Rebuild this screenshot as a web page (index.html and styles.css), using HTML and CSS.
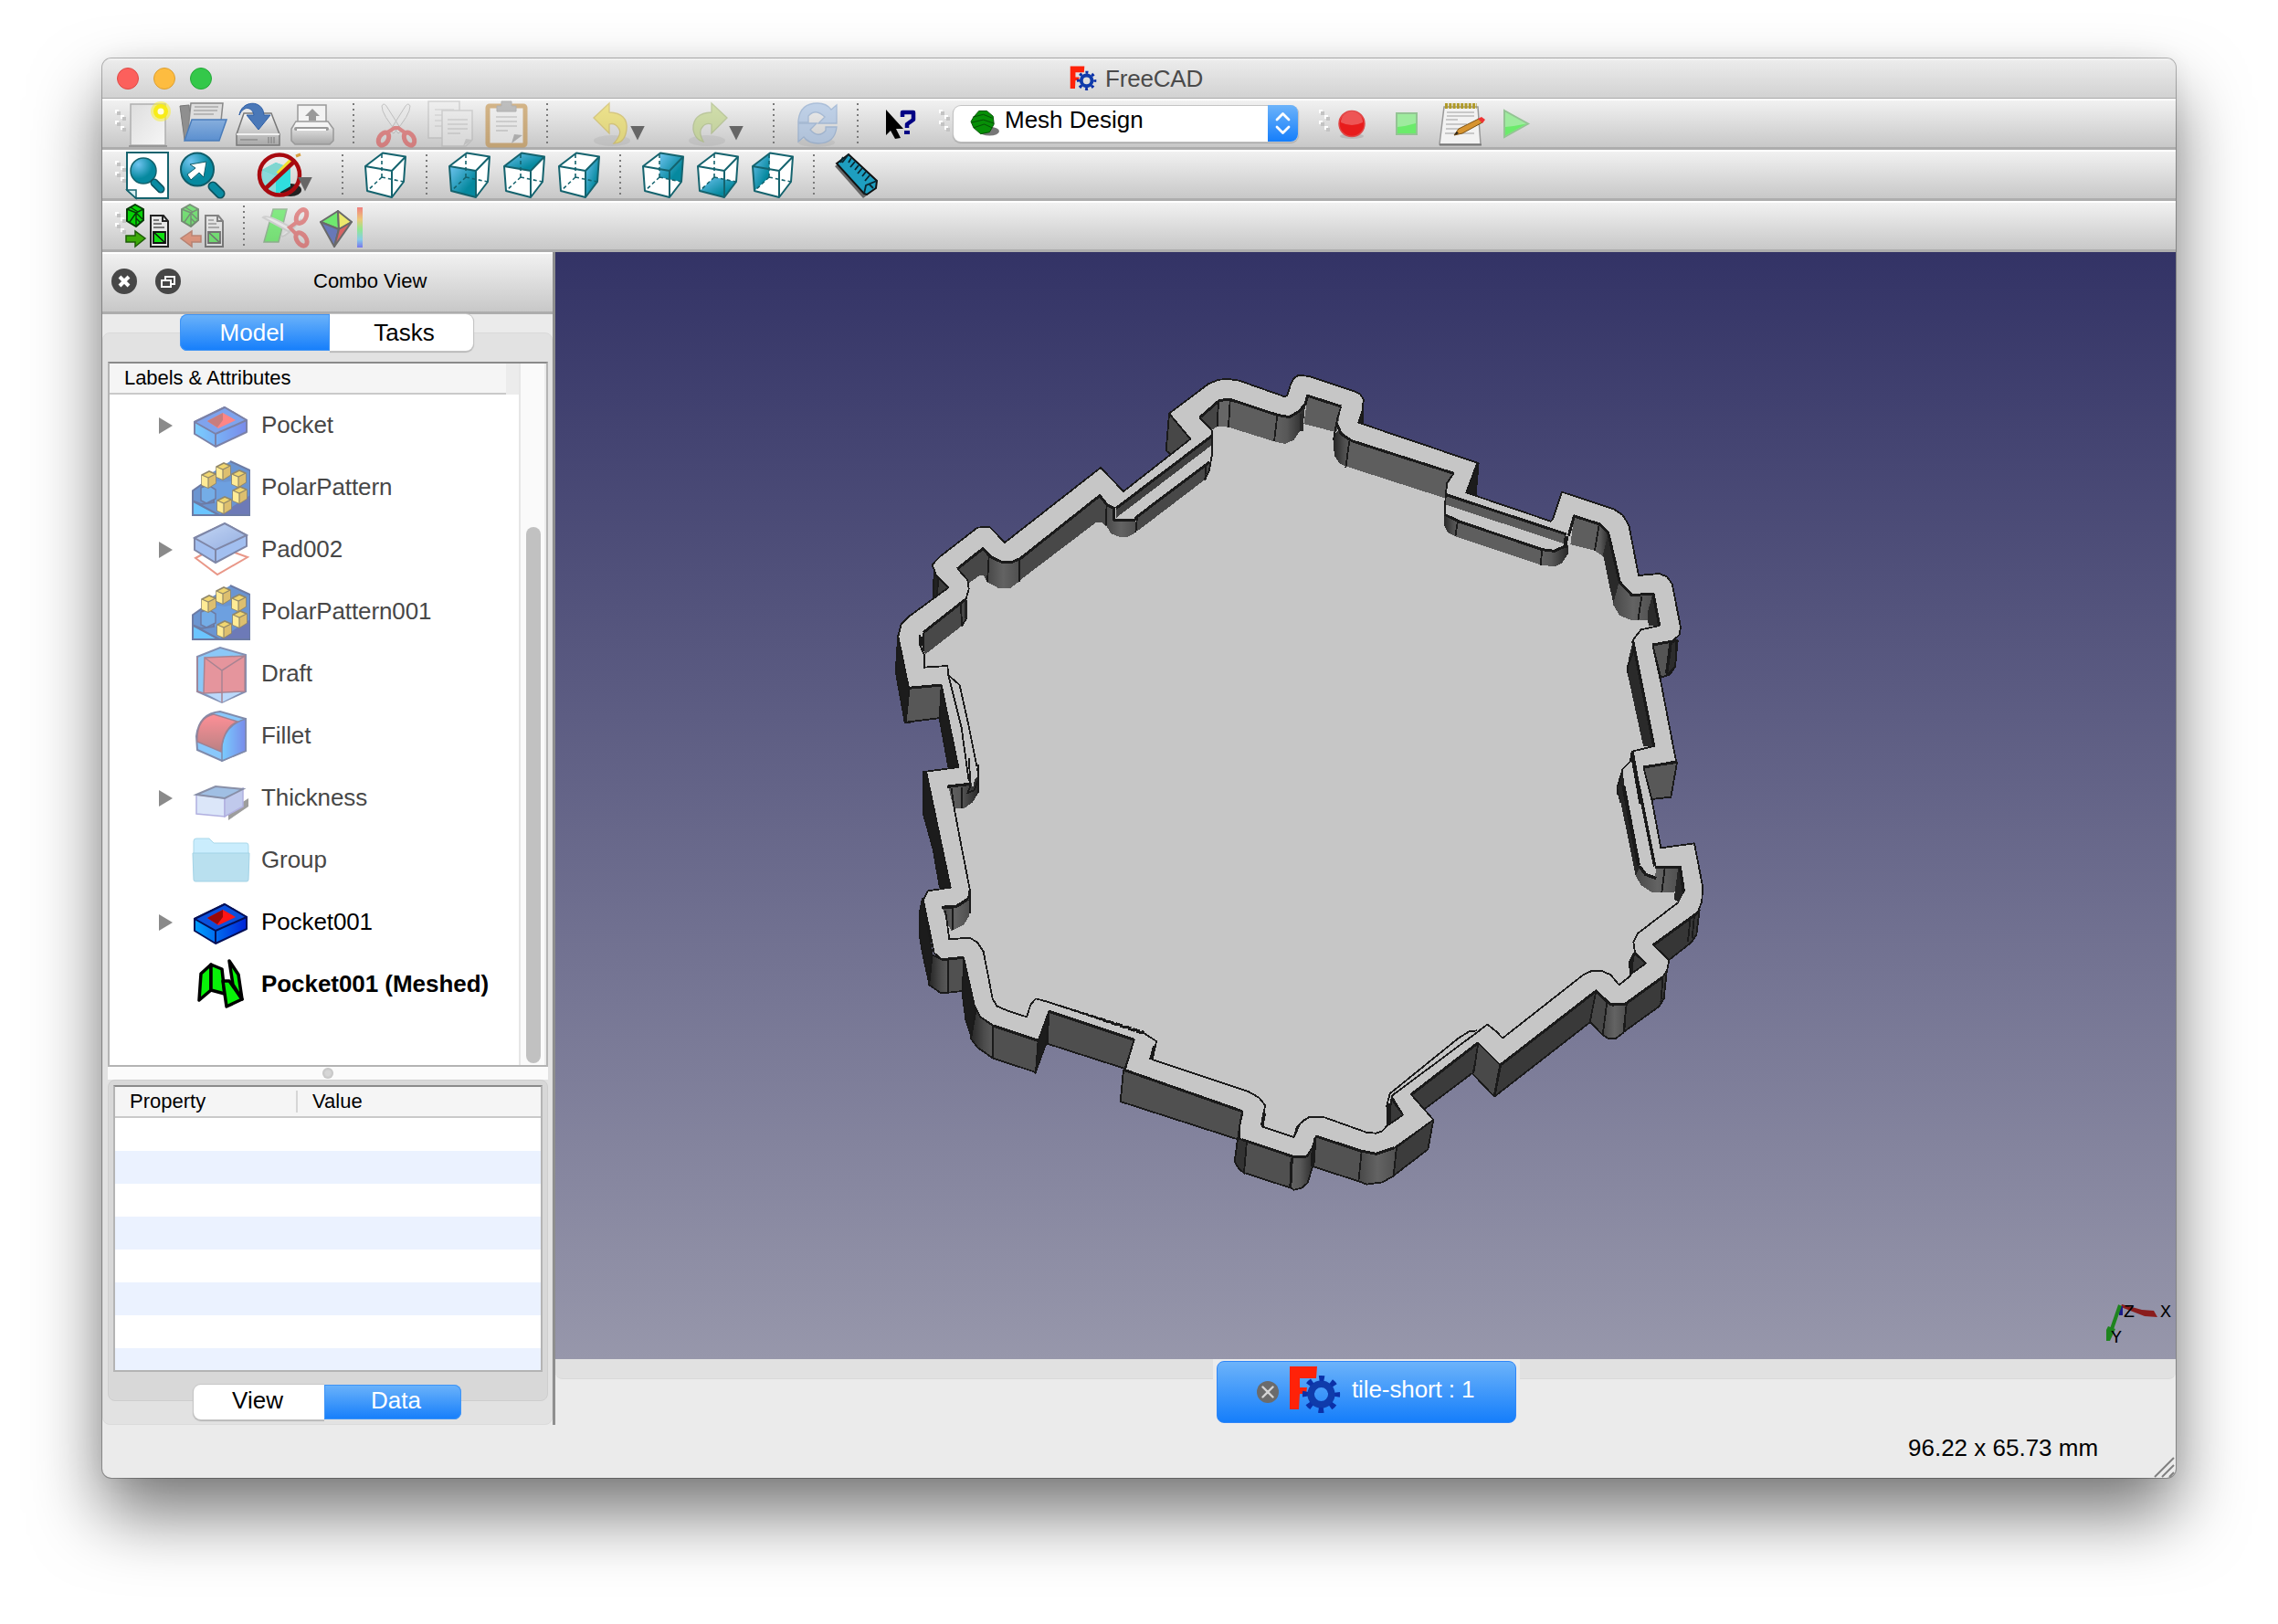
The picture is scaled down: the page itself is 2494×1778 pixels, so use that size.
FILE: index.html
```html
<!DOCTYPE html>
<html lang="en">
<head>
<meta charset="utf-8">
<title>FreeCAD</title>
<link rel="stylesheet" href="styles.css">
</head>
<body>
<svg class="defs" width="0" height="0" aria-hidden="true">
  <defs>
    <linearGradient id="teal" x1="0" y1="0" x2="1" y2="1"><stop offset="0" stop-color="#6fc4f0"/><stop offset=".7" stop-color="#06899f"/></linearGradient>
    <radialGradient id="lens" cx=".3" cy=".25" r=".8"><stop offset="0" stop-color="#6fc4f0"/><stop offset=".7" stop-color="#06899f"/></radialGradient>
    <linearGradient id="paper" x1="0" y1="0" x2="1" y2="1"><stop offset="0" stop-color="#dedede"/><stop offset="1" stop-color="#f6f6f6"/></linearGradient>
    <linearGradient id="metal" x1="0" y1="0" x2="0" y2="1"><stop offset="0" stop-color="#f6f6f6"/><stop offset="1" stop-color="#a8a8a8"/></linearGradient>
    <linearGradient id="folderBlue" x1="0" y1="0" x2="0" y2="1"><stop offset="0" stop-color="#86aedd"/><stop offset="1" stop-color="#5b8fcf"/></linearGradient>
    <linearGradient id="blueSide" x1="0" y1="0" x2="1" y2="0"><stop offset="0" stop-color="#00a0ff"/><stop offset="1" stop-color="#0022d8"/></linearGradient>
    <linearGradient id="padTop" x1="0" y1="0" x2="1" y2="1"><stop offset="0" stop-color="#8fb4ee"/><stop offset="1" stop-color="#3464c4"/></linearGradient>
    <linearGradient id="redFace" x1="0" y1="0" x2="0" y2="1"><stop offset="0" stop-color="#ff2b38"/><stop offset="1" stop-color="#7c1014"/></linearGradient>
    <linearGradient id="rainbow" x1="0" y1="0" x2="0" y2="1"><stop offset="0" stop-color="#f08080"/><stop offset=".3" stop-color="#ecc878"/><stop offset=".55" stop-color="#90e890"/><stop offset=".8" stop-color="#88cce8"/><stop offset="1" stop-color="#7878ec"/></linearGradient>
    <linearGradient id="wallGrad" x1="0" y1="0" x2="1" y2="0"><stop offset="0" stop-color="#626262"/><stop offset=".4" stop-color="#585858"/><stop offset="1" stop-color="#282828"/></linearGradient>
    <linearGradient id="wallGradRev" x1="0" y1="0" x2="1" y2="0"><stop offset="0" stop-color="#262626"/><stop offset=".6" stop-color="#4c4c4c"/><stop offset="1" stop-color="#5c5c5c"/></linearGradient>
    <linearGradient id="wallMid" x1="0" y1="0" x2="1" y2="0"><stop offset="0" stop-color="#484848"/><stop offset=".5" stop-color="#636363"/><stop offset="1" stop-color="#505050"/></linearGradient>

    <symbol id="logo" viewBox="-1 -1 57 54">
      <path d="M0 0H30L29 13H11V23H19L18 30H11L10 47H0Z" fill="#ff2208"/>
      <circle cx="34.5" cy="30.5" r="11.3" fill="none" stroke="#0f3bab" stroke-width="7.5"/>
      <circle cx="34.5" cy="30.5" r="17.6" fill="none" stroke="#0b30a8" stroke-width="6" stroke-dasharray="5.8 8.02" stroke-dashoffset="2.9"/>
    </symbol>
    <symbol id="cube-lines" viewBox="0 0 48 52">
      <path d="M20 28V2M20 28L4 43M20 28L44 33" fill="none" stroke="#14636e" stroke-width="1.6" stroke-dasharray="4 3"/>
      <path d="M2 16L31 21V50L4 43ZM2 16L21 1.5L46 5.500L31 21M46 5.500L44 33L31 50" fill="none" stroke="#14636e" stroke-width="2" stroke-linejoin="round"/>
    </symbol>
    <symbol id="cube-body" viewBox="0 0 48 52"><path d="M2 16L21 1.500L46 5.500L44 33L31 50L4 43Z" fill="#fff"/></symbol>
    <symbol id="handle" viewBox="0 0 12 24">
      <path d="M0 0h4v4H0zM6 6h4v4H6zM0 12h4v4H0zM6 18h4v4H6z" fill="#fff"/>
      <path d="M2 2h4v4H2zM8 8h4v4H8zM2 14h4v4H2zM8 20h4v4H8z" fill="#c3c3c3"/>
    </symbol>
    <symbol id="mini" viewBox="0 0 17 20">
      <path d="M1 5L9 1L16 4V14L8 19L1 16Z" fill="#e8bc10" stroke="#4a3a08" stroke-width="1.600"/>
      <path d="M1 5L8 8V19L1 16Z" fill="#ffdf50"/><path d="M8 8L16 4V14L8 19Z" fill="#c89610"/>
      <path d="M1 5L8 8L16 4M8 8V19" fill="none" stroke="#4a3a08" stroke-width="1.200"/>
    </symbol>
    <symbol id="polar" viewBox="0 0 64 64">
      <path d="M0 36L10 29L18 18L42 3L64 13V62H0Z" fill="#0a50b4"/>
      <path d="M0 46L28 62H0Z" fill="#0aa0ff"/><path d="M30 62L64 40V62Z" fill="#0d2288"/>
      <path d="M22 24L36 26L48 24V38L40 46L26 48L20 36Z" fill="#0d62cc"/>
      <path d="M0 36L10 29L24 36V48L10 50L0 46M0 46L30 62M42 3L64 13V62H1V36" fill="none" stroke="#0b2468" stroke-width="2"/>
      <path d="M10 32L18 29L26 34V44L16 49L10 46Z" fill="#1877d8" stroke="#0b2468" stroke-width="1.5"/>
      <use href="#mini" x="10" y="13" width="17" height="20"/><use href="#mini" x="26" y="4" width="17" height="20"/><use href="#mini" x="43" y="12" width="17" height="20"/><use href="#mini" x="44" y="30" width="17" height="20"/><use href="#mini" x="27" y="41" width="17" height="20"/>
    </symbol>
    <symbol id="pocket" viewBox="0 -2 64 64">
      <path d="M3 26L36 10L60 24V37L26 53L3 39Z" fill="url(#blueSide)" stroke="#041058" stroke-width="2" stroke-linejoin="round"/>
      <path d="M3 26L36 10L60 24L26 39Z" fill="#0b50dd" stroke="#041058" stroke-width="2" stroke-linejoin="round"/>
      <path d="M26 39V53" stroke="#041058" stroke-width="2"/>
      <path d="M17 25L34 16L48 24L29 33Z" fill="#ff1616"/><path d="M17 25L34 16V24L28 32Z" fill="#990808"/>
    </symbol>
    <symbol id="mesh-sheet" viewBox="0 0 30 48">
      <path d="M3 12H17L22 18V46H3Z" fill="#e6e6e6" stroke="#222" stroke-width="2"/><path d="M16 12V18H22" fill="none" stroke="#222" stroke-width="2"/>
      <path d="M6 17H12M6 21H15M6 25H18" stroke="#555" stroke-width="1.600"/>
      <path d="M6 30H19V42H6Z" fill="#10e010" stroke="#111" stroke-width="1.800"/><path d="M6 30L19 42" stroke="#111" stroke-width="1.500"/>
    </symbol>
    <symbol id="mesh-ball" viewBox="0 0 22 26">
      <path d="M11 1L20 6V18L12 25L2 19V6Z" fill="#05d305" stroke="#083a08" stroke-width="2"/>
      <path d="M2 6L12 10L20 6M12 10V25M12 10L5 20M12 10L19 17M6 4L14 9M12 16L17 21" fill="none" stroke="#083a08" stroke-width="1.400"/>
    </symbol>
  </defs>
</svg>

<main class="window">
  <header class="titlebar">
    <div class="lights"><i class="light light-close"></i><i class="light light-min"></i><i class="light light-zoom"></i></div>
    <svg class="title-logo"><use href="#logo"/></svg><span class="title">FreeCAD</span>
  </header>

  <div class="toolbar">
    <svg class="handle"><use href="#handle"/></svg>
    <svg class="tool" viewBox="0 0 48 48"><path d="M5 2H43V47H5Z" fill="url(#paper)" stroke="#b0b0b0" stroke-width="1.500"/><path d="M3 48H45" stroke="#8a8a8a" stroke-width="1.500"/><circle cx="38" cy="10" r="11" fill="#f7ee3a" opacity=".55"/><circle cx="38" cy="10" r="8" fill="#f8ec18"/><circle cx="38" cy="10" r="3.500" fill="#fffde0"/></svg>
    <svg class="tool" viewBox="0 0 48 48"><path d="M-1 4L9 3L12 41H4Z" fill="#8f8f8f" stroke="#777"/><path d="M11 1H46L43 30H8Z" fill="#dedede" stroke="#888" stroke-width="1.500"/><path d="M15 5H41M14 9H40M14 13H36" stroke="#aaa" stroke-width="1.500"/><path d="M12 19H50L42 42H4Z" fill="url(#folderBlue)" stroke="#4a7cba" stroke-width="1.500"/></svg>
    <svg class="tool" viewBox="0 0 48 48"><path d="M9 12H39L48 35V47H1V35Z" fill="url(#metal)" stroke="#777" stroke-width="1.500"/><path d="M1 35H48" stroke="#fff" stroke-width="1.500"/><path d="M5 41H24M36 38V45M39 38V45M42 38V45" stroke="#8d8d8d" stroke-width="1.500"/><path d="M4 14C6 -2 30 -4 31 14H38L25 30L12 14H20C18 4 8 4 4 14Z" fill="#4a78b8" stroke="#2d5ea6"/></svg>
    <svg class="tool" viewBox="0 0 48 48"><path d="M8 3H39V24H8Z" fill="#f3f3f3" stroke="#999" stroke-width="1.500"/><path d="M24 7L32 15H28V20H20V15H16Z" fill="#9a9a9a"/><path d="M6 21H41L47 29V42L43 46H5L1 42V29Z" fill="url(#metal)" stroke="#999" stroke-width="1.500"/><path d="M6 22H41L44 29H3Z" fill="#f5f5f5"/><path d="M6 29H40" stroke="#999" stroke-width="4" stroke-linecap="round"/><path d="M7 30H39" stroke="#fff" stroke-width="2"/></svg>
    <i class="sep"></i>
    <svg class="tool dim" viewBox="0 0 48 48"><path d="M8 4Q10 0 13 4L30 31L26 34Q8 14 8 4ZM39 4Q37 0 34 4L17 31L21 34Q39 14 39 4Z" fill="#e8e8e8" stroke="#999"/><ellipse cx="10" cy="40" rx="5" ry="7.500" transform="rotate(30 10 40)" fill="none" stroke="#d93434" stroke-width="5"/><ellipse cx="38" cy="40" rx="5" ry="7.500" transform="rotate(-30 38 40)" fill="none" stroke="#d93434" stroke-width="5"/><path d="M14 33L22 28H26L33 33" fill="none" stroke="#d93434" stroke-width="4"/></svg>
    <svg class="tool faint" viewBox="0 0 48 48"><path d="M-1 -1H33V39H-1Z" fill="#ededed" stroke="#a5a5a5" stroke-width="1.500"/><path d="M6 8H27M6 14H27M6 20H15M6 26H15" stroke="#bbb" stroke-width="1.500"/><path d="M14 9H47V41L40 48H14Z" fill="#ededed" stroke="#a5a5a5" stroke-width="1.500"/><path d="M20 19H42M20 24H42M20 29H42M20 34H34" stroke="#aaa" stroke-width="1.500"/><path d="M47 41L37 48L40 40Z" fill="#aaa"/></svg>
    <svg class="tool dim" viewBox="0 0 48 48"><rect x="4" y="4" width="41" height="43" rx="2" fill="#f0f0f0" stroke="#bb7d24" stroke-width="5"/><path d="M13 16H36M13 21H36M13 26H36M13 31H26" stroke="#aaa" stroke-width="1.500"/><path d="M42 36L30 45L33 35Z" fill="#888"/><path d="M14 10V4H19V-1H30V4H35V10Z" fill="#8f8f8f" stroke="#777"/></svg>
    <i class="sep"></i>
    <span class="menu-tool"><svg class="tool dim" viewBox="0 0 48 48"><ellipse cx="26" cy="42" rx="20" ry="6" fill="#999" opacity=".4"/><path d="M6 17L23 1V11Q44 12 42 30Q40 45 28 45Q38 34 33 28Q29 22 23 24V34Z" fill="#edd92e" stroke="#c8aa20" stroke-width="1.300"/></svg><i class="caret"></i></span>
    <span class="menu-tool menu-tool-redo"><svg class="tool dim" viewBox="0 0 48 48"><ellipse cx="24" cy="42" rx="20" ry="6" fill="#999" opacity=".4"/><path d="M46 17L29 1V11Q8 12 9 30Q11 41 20 43Q14 32 19 27Q23 22 29 24V34Z" fill="#b5d06a" stroke="#94ab58" stroke-width="1.300"/></svg><i class="caret"></i></span>
    <i class="sep"></i>
    <svg class="tool dim" viewBox="0 0 48 48"><ellipse cx="24" cy="44" rx="20" ry="5" fill="#999" opacity=".4"/><path d="M4 20Q6 1 25 1Q35 1 40 8L46 3V23H26L33 16Q23 6 15 15V22H4Z" fill="#94b7e4" stroke="#6b92c6" stroke-width="1.300"/><path d="M46 27Q44 45 26 45Q15 45 10 38L4 43V23H24L17 30Q26 40 34 31V27Z" fill="#94b7e4" stroke="#6b92c6" stroke-width="1.300"/></svg>
    <i class="sep"></i>
    <svg class="tool" viewBox="0 0 48 48"><path d="M8 8V36L13 31L18 40L24 39L19 29H27Z" fill="#000"/><path d="M26 16V11H38V19L31 24V28" fill="none" stroke="#000084" stroke-width="4.500" stroke-linejoin="round"/><path d="M28 31H34V35H28Z" fill="#000084"/></svg>
    <svg class="handle handle-gap"><use href="#handle"/></svg>
    <div class="combo"><svg class="combo-icon" viewBox="0 0 32 30"><ellipse cx="21" cy="24" rx="11" ry="5" fill="#777"/><path d="M3 8L9 1H18L25 7L26 16L21 25L11 27L3 20L0 13Z" fill="#078f07" stroke="#065206"/><path d="M2 8L14 5L24 9M1 14L14 11L26 15M3 20L15 16L24 20" fill="none" stroke="#064d06"/></svg><span>Mesh Design</span><svg class="combo-arrows" viewBox="0 0 33 40"><path d="M10 16L16.500 9.500L23 16M10 24L16.500 30.500L23 24" fill="none" stroke="#fff" stroke-width="2.800" stroke-linecap="round" stroke-linejoin="round"/></svg></div>
    <svg class="handle handle-gap-wide"><use href="#handle"/></svg>
    <svg class="tool" viewBox="0 0 48 48"><ellipse cx="24" cy="37" rx="13" ry="3" fill="#999" opacity=".4"/><circle cx="24" cy="23.500" r="14" fill="#e81c1c" stroke="#e04848" stroke-width="1.500"/><path d="M12 22A12 12 0 0 1 36 22Q24 28 12 22Z" fill="#fff" opacity=".25"/></svg>
    <svg class="tool" viewBox="0 0 48 48"><path d="M13 12H35V35H13Z" fill="#9eeb9e" stroke="#94c494" stroke-width="2"/><path d="M14 27Q24 26 34 23V34H14Z" fill="#6beb6b"/></svg>
    <svg class="tool" viewBox="0 0 48 48"><path d="M5 5H42L45 46H0Z" fill="#f2f2f2" stroke="#999" stroke-width="1.500"/><path d="M0 46.500H46" stroke="#777" stroke-width="2"/><path d="M6 4H41" stroke="#b09a28" stroke-width="6" stroke-dasharray="3 1.300"/><path d="M8 11H38M8 15H38M7 19H20M7 24H30M7 29H25M6 34H38" stroke="#bbb" stroke-width="1.500"/><path d="M16 36L21 29L43 18L47 22L25 34Z" fill="#d79430" stroke="#7b5113"/><path d="M42 18L46 16L50 19L47 23Z" fill="#e33"/><path d="M16 36L19 32L21 34Z" fill="#222"/></svg>
    <svg class="tool" viewBox="0 0 48 48"><path d="M11 9L37 23.500L11 38Z" fill="#9eeb9e" stroke="#94c494" stroke-width="2"/><path d="M12 27Q23 26 35 23.500L12 36.500Z" fill="#6beb6b"/></svg>
  </div>

  <div class="toolbar">
    <svg class="handle"><use href="#handle"/></svg>
    <svg class="tool" viewBox="0 0 48 48"><path d="M1 -1H46V49H11L1 40Z" fill="#fff" stroke="#14636e" stroke-width="2"/><path d="M1 40H11V49Z" fill="#d8eef2" stroke="#14636e" stroke-width="1.500"/><circle cx="19" cy="19" r="14" fill="url(#lens)" stroke="#14636e" stroke-width="1.500"/><path d="M31 32L38 39" stroke="#0c5360" stroke-width="9" stroke-linecap="round"/><path d="M31 32L38 39" stroke="#0a8ba2" stroke-width="6" stroke-linecap="round"/></svg>
    <svg class="tool" viewBox="0 0 48 48"><circle cx="18" cy="17.500" r="18" fill="url(#lens)" stroke="#0f5c69" stroke-width="2"/><path d="M7 23L16 16L10 12L28 9L25 26L20 21L11 29Z" fill="#fff" stroke="#0f5c69"/><path d="M35 36L43 44" stroke="#0c5360" stroke-width="11" stroke-linecap="round"/><path d="M35 36L43 44" stroke="#0a8ba2" stroke-width="7.500" stroke-linecap="round"/></svg>
    <span class="menu-tool"><svg class="tool" viewBox="0 0 48 48"><ellipse cx="38" cy="40" rx="12" ry="7" fill="#222"/><path d="M7 18L22 10L38 16V36L24 44L8 38Z" fill="#2fdede"/><path d="M7 18L22 24V43L8 38Z" fill="#8adada"/><path d="M7 18L22 10L38 16L22 24Z" fill="#7fd6d0"/><path d="M24 22L40 6" stroke="#f0e030" stroke-width="4"/><path d="M44 3L49 1" stroke="#d8a040" stroke-width="3"/><circle cx="26" cy="23.500" r="22" fill="none" stroke="#a80a10" stroke-width="4.500"/><path d="M10 39L42 9" stroke="#a80a10" stroke-width="4.500"/></svg><i class="caret"></i></span>
    <i class="sep"></i>
    <svg class="tool cube" viewBox="0 0 48 52"><use href="#cube-body"/><use href="#cube-lines"/></svg>
    <i class="sep"></i>
    <svg class="tool cube" viewBox="0 0 48 52"><use href="#cube-body"/><path d="M2 16L31 21V50L4 43Z" fill="url(#teal)"/><use href="#cube-lines"/></svg>
    <svg class="tool cube" viewBox="0 0 48 52"><use href="#cube-body"/><path d="M2 16L21 1.500L46 5.500L31 21Z" fill="url(#teal)"/><use href="#cube-lines"/></svg>
    <svg class="tool cube" viewBox="0 0 48 52"><use href="#cube-body"/><path d="M31 21L46 5.500L44 33L31 50Z" fill="url(#teal)"/><use href="#cube-lines"/></svg>
    <i class="sep"></i>
    <svg class="tool cube" viewBox="0 0 48 52"><use href="#cube-body"/><path d="M21 1.500L46 5.500L44 33L20 28Z" fill="url(#teal)"/><use href="#cube-lines"/></svg>
    <svg class="tool cube" viewBox="0 0 48 52"><use href="#cube-body"/><path d="M20 28L44 33L31 50L4 43Z" fill="url(#teal)"/><use href="#cube-lines"/></svg>
    <svg class="tool cube" viewBox="0 0 48 52"><use href="#cube-body"/><path d="M2 16L21 1.500L20 28L4 43Z" fill="url(#teal)"/><use href="#cube-lines"/></svg>
    <i class="sep"></i>
    <svg class="tool" viewBox="0 0 48 48"><path d="M0 14L6 10L40 42L31 49Z" fill="#666"/><path d="M2 11L15 1L46 30L45 38L35 45L32 44Z" fill="#1e9ec0" stroke="#111" stroke-width="2"/><path d="M32 44L34 35L46 30M15 1L8 10M18 5L15 10M22 9L17 15M26 13L22 18M30 16L25 22M34 20L30 25M38 24L33 30M9 4L6 10M38 34L42 38" fill="none" stroke="#0a2630" stroke-width="1.800"/></svg>
  </div>

  <div class="toolbar">
    <svg class="handle"><use href="#handle"/></svg>
    <svg class="tool" viewBox="0 0 48 48"><use href="#mesh-ball" x="-1" y="-1" width="22" height="26"/><path d="M0 34H10V29L21 37L10 46V41H0Z" fill="#3caa08" stroke="#1e5c08" stroke-width="1.500"/><use href="#mesh-sheet" x="24" y="0" width="30" height="48"/></svg>
    <svg class="tool dim" viewBox="0 0 48 48"><use href="#mesh-ball" x="-1" y="-1" width="22" height="26"/><path d="M22 34H12V29L0 37L12 46V41H22Z" fill="#e0582c" stroke="#a03818" stroke-width="1.500"/><use href="#mesh-sheet" x="24" y="0" width="30" height="48"/></svg>
    <i class="sep"></i>
    <svg class="tool dim" viewBox="0 0 48 48"><path d="M9 5H24L15 41H-1Z" fill="#1eea1e" stroke="#4d8a4d" stroke-width="1.500"/><path d="M-2 14Q3 10 30 26L27 30ZM18 34Q21 38 40 16" fill="#eee" stroke="#bbb" stroke-width="2"/><ellipse cx="40" cy="13" rx="5" ry="8" transform="rotate(28 40 13)" fill="none" stroke="#d93434" stroke-width="5"/><ellipse cx="40" cy="38" rx="5" ry="8" transform="rotate(-35 40 38)" fill="none" stroke="#d93434" stroke-width="5"/><path d="M34 20L27 25L34 32" fill="none" stroke="#d93434" stroke-width="4"/></svg>
    <svg class="tool" viewBox="0 0 48 48"><g stroke="#6a6a6a" stroke-width="2" stroke-linejoin="round"><path d="M1 19L20 7L21 27Z" fill="#6fe86f"/><path d="M20 7L35 19L21 27Z" fill="#ece96c"/><path d="M1 19L21 27L16 46Z" fill="#6878b8"/><path d="M35 19L16 46L21 27Z" fill="#d86464"/></g><path d="M41 3H47V47H41Z" fill="url(#rainbow)"/></svg>
  </div>

  <div class="workspace">
    <aside class="dock">
      <div class="dock-title">
        <svg class="dock-btn" viewBox="0 0 28 28"><circle cx="14" cy="14" r="14" fill="#474747"/><path d="M9 9L19 19M19 9L9 19" stroke="#fff" stroke-width="4"/></svg>
        <svg class="dock-btn" viewBox="0 0 28 28"><circle cx="14" cy="14" r="14" fill="#474747"/><path d="M11 12V9H21V17H18M7 13H17V20H7Z" fill="none" stroke="#fff" stroke-width="2"/></svg>
        <span>Combo View</span>
      </div>
      <div class="tabs tabs-top"><span class="tab tab-on tab-model">Model</span><span class="tab tab-tasks">Tasks</span></div>
      <div class="panel">
        <div class="tree">
          <div class="tree-main">
            <div class="tree-head"><span>Labels &amp; Attributes</span></div>
            <div class="row off"><i class="arrow"></i><svg><use href="#pocket"/></svg><span>Pocket</span></div>
            <div class="row off"><svg class="strong"><use href="#polar"/></svg><span>PolarPattern</span></div>
            <div class="row off"><i class="arrow"></i><svg viewBox="0 -2 64 64"><path d="M4 39L28 26L61 38L28 57Z" fill="#fff" stroke="#d63a1c" stroke-width="2"/><path d="M3 17L36 1L60 14V26L26 44L3 30Z" fill="#4f86e4" stroke="#0b1a58" stroke-width="2"/><path d="M3 17L36 1L60 14L26 30Z" fill="url(#padTop)" stroke="#0b1a58" stroke-width="2"/><path d="M26 30V44" stroke="#0b1a58" stroke-width="2"/></svg><span>Pad002</span></div>
            <div class="row off"><svg class="strong"><use href="#polar"/></svg><span>PolarPattern001</span></div>
            <div class="row off"><svg viewBox="0 -1 64 64"><path d="M6 12L31 2L59 10V50L33 62L6 50Z" fill="#2296f0" stroke="#122c70" stroke-width="2"/><path d="M12 50H56L33 62Z" fill="#80b8f8"/><path d="M14 13L58 11V50L13 52Z" fill="#cf3644" stroke="#5a1430" stroke-width="1.500"/><path d="M14 13L33 27L58 11M33 27V62M6 12V50L13 52" fill="none" stroke="#5a1430" stroke-width="1.500"/></svg><span>Draft</span></div>
            <div class="row off"><svg viewBox="0 -2 64 64"><path d="M5 30Q8 5 31 3L59 11V46L33 57L6 45Z" fill="#1f96f8" stroke="#0d2260" stroke-width="2"/><path d="M33 57V40Q36 18 59 11V46Z" fill="url(#blueSide)" stroke="#0d2260" stroke-width="1.500"/><path d="M6 36Q5 10 24 6L50 14Q34 21 32 47Z" fill="url(#redFace)" stroke="#4a1030" stroke-width="1.500"/></svg><span>Fillet</span></div>
            <div class="row off"><i class="arrow"></i><svg viewBox="0 -10 64 64"><path d="M40 36L62 22V31L40 46Z" fill="#444"/><path d="M5 18L36 22V42L5 39Z" fill="#bcd0f4" stroke="#6a68c4" stroke-width="1.500"/><path d="M36 22L56 11V31L36 42Z" fill="#8898dc" stroke="#6a68c4" stroke-width="1.500"/><path d="M5 18L26 9L56 12L36 22Z" fill="#4a86cc" stroke="#1c2a58" stroke-width="2"/></svg><span>Thickness</span></div>
            <div class="row"><svg viewBox="0 -2 64 64"><path d="M2 9Q2 6 5 6H19L24 11H60Q62 11 62 14V30H2Z" fill="#caedfd" stroke="#a9d8ea"/><path d="M1 22H63L62 51Q62 53 60 53H4Q2 53 2 51Z" fill="#b9e0ef" stroke="#a3d3e6"/></svg><span class="muted">Group</span></div>
            <div class="row"><i class="arrow"></i><svg><use href="#pocket"/></svg><span>Pocket001</span></div>
            <div class="row current"><svg viewBox="0 -4 64 64"><g fill="#08f208" stroke="#000" stroke-width="3.500" stroke-linejoin="round"><path d="M8 45L10 16L21 6V34Z"/><path d="M21 6L33 11L36 38L21 34Z"/><path d="M34 24L38 52L55 44L41 24Z"/><path d="M41 2L51 17L55 44L45 28Z"/></g></svg><span>Pocket001 (Meshed)</span></div>
          </div>
          <div class="scroll"><i class="thumb"></i></div>
        </div>
        <div class="splitter"><i></i></div>
        <div class="group">
          <div class="props">
            <div class="props-head"><span class="col-prop">Property</span><span class="col-value">Value</span></div>
            <div class="stripes"></div>
          </div>
        </div>
        <div class="tabs tabs-bottom"><span class="tab tab-view">View</span><span class="tab tab-on tab-data">Data</span></div>
      </div>
    </aside>

    <section class="mdi">
      <svg class="view3d" viewBox="608 276 1774 1212">
        <g transform="translate(970 400) scale(.333333)" stroke="#1a1a1a" stroke-width="5.500" stroke-linejoin="round" shape-rendering="crispEdges">
          <!-- outer walls, north west -->
          <path d="M930 158L1005 242L935 292L920 280Z" fill="#474747"/>
          <path d="M158 680L205 730L155 768Z" fill="#3c3c3c"/><path d="M158 685L172 700L168 755L155 765Z" fill="#222"/>
          <path d="M40 885L32 1005L62 1172H80V1060Z" fill="#1c1c1c"/>
          <path d="M77 1060L182 1048L180 1158L65 1172Z" fill="#575757"/>
          <path d="M182 1050L240 1318H205L176 1160Z" fill="#1c1c1c"/>
          <!-- outer walls, north east -->
          <g transform="translate(1290 0)">
            <path d="M278 112L276 188L260 190Z" fill="#1c1c1c"/>
            <path d="M656 322L647 425L614 418Z" fill="#1c1c1c"/>
            <path d="M1228 918L1310 905L1302 990L1285 1015L1255 1025Z" fill="#555"/>
            <path d="M1290 910L1310 905L1302 990L1275 1018Z" fill="#2c2c2c"/>
            <path d="M1198 1320L1308 1305L1288 1418L1225 1425Z" fill="#585858"/>
          </g>
          <!-- outer walls, south east -->
          <g transform="translate(1290 1380)">
            <path d="M1230 524L1382 410L1372 490L1355 515L1282 573Z" fill="#363636"/><path d="M1352 435L1344 512M1365 425L1358 500" fill="none"/>
            <path d="M1275 605L1265 700L1250 725L1135 808L1140 720Z" fill="#3a3a3a"/><path d="M1262 625L1255 712" fill="none"/>
            <path d="M1042 675L1080 715L1065 822L1022 775Z" fill="#474747" stroke="none"/>
            <path d="M1078 712L1095 722L1142 720L1132 812L1105 832H1085L1064 820Z" fill="url(#wallMid)"/><path d="M1022 775L1064 820" fill="none"/>
            <path d="M728 918L1042 675L1022 778L708 1022Z" fill="#393939"/>
            <path d="M655 845L728 918L708 1022L635 945Z" fill="#494949"/>
            <path d="M435 1015L655 845L635 945L480 1062Z" fill="#3b3b3b" stroke="none"/><path d="M635 945L480 1062" fill="none"/>
            <path d="M508 1098L490 1195L375 1283L387 1188Z" fill="#3c3c3c"/>
            <path d="M387 1188L377 1283L340 1303L290 1310L262 1300L272 1203Z" fill="url(#wallMid)"/>
            <path d="M122 1152L272 1203L262 1300L115 1252Z" fill="#525252"/>
          </g>
          <!-- outer walls, south west -->
          <g transform="translate(0 1290)">
            <path d="M1160 1215L1160 1250L1185 1260L1178 1364L1160 1350L1145 1325Z" fill="#333"/>
            <path d="M1185 1258L1335 1308L1330 1412L1176 1362Z" fill="#505050"/>
            <path d="M1335 1308L1385 1308L1408 1245L1400 1345L1385 1395L1365 1412L1340 1418L1330 1412Z" fill="url(#wallGrad)"/>
            <path d="M780 1025L1170 1160L1155 1252L770 1128Z" fill="#505050"/>
            <path d="M535 832L815 925L785 1020L530 938Z" fill="#4e4e4e"/>
            <path d="M535 832L500 928L490 1035L525 940Z" fill="#1c1c1c"/>
            <path d="M352 880L500 928L492 1032L350 985Z" fill="#505050"/>
            <path d="M285 800L310 850L352 880L350 985L300 950L278 920Z" fill="url(#wallGradRev)"/>
            <path d="M257 655L295 830L280 915L262 860L250 765Z" fill="#1c1c1c"/>
            <path d="M203 662L255 655L252 765L205 770Z" fill="#505050"/>
            <path d="M148 645L185 662H203L205 770H178L142 745Z" fill="url(#wallGradRev)"/>
            <path d="M120 460L152 645L142 740L120 640L110 580V510Z" fill="#1c1c1c"/>
            <path d="M132 44L212 425H177L155 300L122 180V44Z" fill="#1c1c1c"/>
          </g>
          <!-- top face and floor -->
          <path fill="#c6c6c6" d="M930 158L1060 60L1090 48L1120 44L1160 50L1310 103L1318 98L1328 66L1340 42L1355 32L1390 36L1540 86L1558 95L1568 112L1566 145L1552 188L1942 320L1906 418L2183 512L2190 505L2220 416L2390 472L2420 492L2440 525L2472 690L2540 684L2565 694L2582 718L2610 860L2606 885L2580 908L2518 918L2545 1040L2595 1300L2488 1320L2515 1425L2545 1585L2655 1570L2682 1710L2680 1760L2665 1800L2650 1810L2520 1904L2572 1955L2565 1988L2550 2010L2425 2100H2380L2332 2055L2018 2298L1945 2225L1725 2395L1798 2478L1670 2570L1610 2590L1560 2580L1412 2532L1400 2570L1380 2600L1340 2600L1160 2540V2505L1170 2450L785 2315L815 2215L535 2122L500 2218L355 2170L310 2140L290 2100L255 1945L185 1952L158 1930L150 1890L122 1755L138 1726L212 1715L132 1334L238 1320L182 1050L75 1060L40 890L50 850L75 825L205 730L165 690L152 655L175 630L300 533L340 530L390 582L705 336L780 414L1000 242Z"/>
          <path fill="none" stroke-width="9" d="M75 1060L182 1050M355 2170L500 2218M535 2122L815 2215M785 2315L1170 2450M1170 2543L1340 2600H1380M1412 2532L1560 2580L1610 2590L1670 2570M1725 2395L1945 2225M2018 2298L2332 2055L2380 2100H2425L2550 2010M2520 1904L2670 1795M2518 918L2600 903M2488 1320L2595 1303M185 1952L255 1945"/>
          <!-- inner walls, north west -->
          <g stroke="none">
            <path d="M1030 172L1095 115L1090 200L1070 212Z" fill="#454545"/><path d="M1095 115H1130L1125 203L1088 200Z" fill="#666"/><path d="M1130 112L1285 165L1275 250L1125 203Z" fill="#5e5e5e"/>
            <path d="M1285 165L1325 170L1360 145L1378 120L1370 200L1340 245L1310 258L1275 250Z" fill="url(#wallGrad)"/>
            <path d="M1385 100L1495 135L1480 220L1372 192Z" fill="#5e5e5e"/>
            <path d="M755 470L1070 232V262L757 500Z" fill="#404040"/><path d="M820 505L1064 322L1062 345L1048 375L825 545Z" fill="#484848"/>
            <path d="M725 455L750 480V512H822V548L795 563H765L740 553L722 525Z" fill="url(#wallMid)"/>
            <path d="M437 635L702 428L725 465L722 530L710 516H690L437 708Z" fill="#484848"/>
            <path d="M338 628L390 650L437 635V710L410 731H368L333 712Z" fill="url(#wallMid)"/>
            <path d="M235 668L318 602L340 628L333 712L320 690H308L272 715Z" fill="#474747"/>
            <path d="M122 875L265 765V830L250 855L128 950Z" fill="#484848"/>
          </g>
          <g fill="none">
            <path d="M1030 172L1095 115L1130 112L1285 163L1325 170L1358 150L1378 125L1385 100L1495 135M755 470L1070 232M818 502L1062 318M750 470V510H815L825 495M437 638L702 428L728 460L752 470M235 668L318 602L345 630L385 648H410L437 636M122 878L262 768" stroke-width="9"/>
            <path d="M1030 172L1072 215V285L1062 345L1048 375L1050 330M1092 118L1088 200M1130 115L1125 203M1285 165L1275 250M725 455L722 525M825 498L820 550M437 636V712M338 628L333 712M235 668L268 705L272 735L262 770L265 830L250 855L245 785M112 885V920L125 950V992L202 987L205 1018L242 1050L275 1200L303 1340M205 1018L248 1190L272 1365M122 878V940"/>
            <path d="M1365 160V215" stroke="#2a2a2a" stroke-width="12"/><path d="M262 770V830" stroke="#222" stroke-width="9"/><path d="M115 890V920" stroke-width="10"/>
          </g>
          <!-- inner walls, north east -->
          <g transform="translate(1290 0)">
            <g stroke="none">
              <path d="M200 210L235 245L222 332L200 322L182 295L180 230Z" fill="url(#wallGradRev)"/><path d="M232 245L575 355L550 400L548 437L222 332Z" fill="#5e5e5e"/>
              <path d="M550 430L945 555L935 585L550 458Z" fill="#5a5a5a"/><path d="M542 485L588 510L580 562L555 548L542 525Z" fill="url(#wallGradRev)"/>
              <path d="M588 510L865 605L860 655L580 562Z" fill="#5e5e5e"/><path d="M865 605L905 612L950 590V620L930 650L910 660L860 657Z" fill="url(#wallGrad)"/>
              <path d="M970 495L1055 525L1038 608L958 588Z" fill="#5e5e5e"/><path d="M1055 525L1085 548L1068 630L1038 608Z" fill="url(#wallGrad)"/>
              <path d="M1085 545L1120 712L1100 785L1085 720L1065 620Z" fill="#2a2a2a"/><path d="M1118 712L1160 755L1230 750L1215 838H1160L1120 822L1098 785Z" fill="url(#wallMid)"/>
              <path d="M1228 750L1250 855H1214L1212 810Z" fill="#2a2a2a"/><path d="M1163 905L1232 1250H1197L1145 1010L1150 960Z" fill="#2a2a2a"/>
              <path d="M1130 1335L1142 1440L1120 1438L1112 1400V1380Z" fill="#222"/>
            </g>
            <g fill="none">
              <path d="M95 100L205 135M190 190L205 225L240 248L575 355M550 425L945 555M545 490L590 512L865 605L905 610L945 592M952 560L970 495L1055 522L1082 550L1120 712L1160 755L1230 750L1250 855M1163 905L1232 1250" stroke-width="9"/>
              <path d="M205 135L192 175L180 245M232 248L220 335M575 355L553 385L548 430L545 490M588 512L580 562M865 605L860 658M1052 525L1038 608M1192 758L1180 838M1250 855L1190 868L1165 900V940L1145 990V1010M1236 1250L1160 1268L1155 1300L1130 1325L1112 1385V1410M1285 910L1272 1010M1305 905V945"/>
              <path d="M945 560L940 600M1160 1270L1190 1440" stroke-width="13"/>
            </g>
          </g>
          <!-- inner walls, south east -->
          <g transform="translate(1290 1380)">
            <g stroke="none"><path d="M1180 260L1235 305L1240 270L1315 265L1300 350H1225L1190 328L1172 295Z" fill="url(#wallMid)"/><path d="M1312 265L1332 350L1315 382L1298 375Z" fill="#262626"/><path d="M1182 265L1235 300V265L1228 300L1205 290Z" fill="#c6c6c6"/></g>
            <path d="M1112 0H1138L1185 270L1172 295Z" fill="#262626" stroke="none"/><path d="M1132 0L1182 262" fill="none" stroke-width="12"/>
            <g fill="none"><path d="M1182 0L1235 265M1185 265L1205 292L1240 305M1235 268H1318L1330 350" stroke-width="10"/>
            <path d="M1268 272L1258 350M1315 382L1180 485L1165 515L1170 550L1208 585M1170 545L1152 580L1155 625L1118 655L1090 622L1060 608H1030L1000 622L735 830L715 808L685 785L655 808L370 1020L408 1082M650 805L625 808L590 830L365 1012L355 1050L358 1115L408 1082M358 1115L340 1135L320 1142L290 1140L150 1090L100 1088L70 1110L50 1155L0 1138M655 845L640 945"/></g>
            <path d="M1168 550L1205 585L1155 620Z" fill="#3a3a3a"/><path d="M1158 570V615" stroke-width="10"/><path d="M370 1030L408 1082L360 1115Z" fill="#3a3a3a"/><path d="M362 1045V1112" stroke-width="14"/><path d="M728 918L708 1022M120 1155L108 1220V1250M42 1225L38 1320" fill="none" stroke-width="8"/>
          </g>
          <!-- inner walls, south west -->
          <g transform="translate(0 1290)">
            <path d="M205 95L275 85L303 60V115L285 145L255 166L222 165Z" fill="url(#wallGrad)" stroke="none"/><path d="M275 60L300 25L285 100Z" fill="#c6c6c6" stroke="none"/>
            <path d="M185 492L225 490L272 460V520L255 548L215 568L205 550Z" fill="url(#wallMid)" stroke="none"/>
            <g fill="none"><path d="M200 94L275 85M182 490L230 488L270 462" stroke-width="10"/><path d="M303 60V115M275 430V510M250 95V165M220 492V565M215 100L225 170L240 250L275 430L270 462M272 0L278 90L268 115L290 105L303 70V20M195 500L208 595L275 590L300 605L320 635L350 790L365 815L400 830L462 850L475 810L492 790L530 800L850 905L888 930L875 990L1190 1095L1225 1115L1245 1140L1235 1210L1340 1245L1350 1210L1370 1190L1390 1180H1440"/>
            <path d="M535 802L850 900M575 815L840 905" stroke-dasharray="22 7"/><path d="M882 945L870 990M1243 1165L1235 1208" stroke-width="11"/><path d="M815 925L785 1020M1172 1160L1160 1215V1245"/></g>
          </g>
        </g>
        <!-- axis cross -->
        <g class="axes"><path d="M2323 1428L2345 1434L2358 1435L2362 1442L2348 1441L2322 1431Z" fill="#8a1c1c"/><path d="M2322 1430V1440" stroke="#1a1a8c" stroke-width="4"/><path d="M2321 1429L2312 1455" stroke="#1e841e" stroke-width="4"/><path d="M2308 1452L2316 1455L2310 1468H2306V1456Z" fill="#1e841e"/>
        <text x="2325" y="1442">Z</text><text x="2365" y="1442">X</text><text x="2311" y="1470">Y</text></g>
      </svg>
      <div class="mdi-tabs">
        <div class="mdi-edge"></div>
        <div class="mdi-slot"><div class="mdi-tab"><svg class="mdi-close" viewBox="0 0 24 24"><circle cx="12" cy="12" r="12" fill="#6b6b6b"/><path d="M6.500 6.500L17.500 17.500M17.500 6.500L6.500 17.500" stroke="#d4d4d4" stroke-width="2.400" stroke-linecap="round"/></svg><svg class="mdi-logo"><use href="#logo"/></svg><span>tile-short : 1</span></div></div>
        <div class="mdi-edge"></div>
      </div>
    </section>
  </div>

  <footer class="status"><span>96.22 x 65.73 mm</span><svg class="grip" viewBox="0 0 24 24"><path d="M1 23L22 2M9 23L22 10M17 23L22 18" stroke="#808080" stroke-width="2"/></svg></footer>
</main>
</body>
</html>
```
FILE: styles.css
```css
* { box-sizing: border-box; }
body {
  margin: 0;
  padding: 64px 112px 0;
  height: 1778px;
  overflow: hidden;
  background: #fff;
  font-family: "Liberation Sans", Arial, sans-serif;
  font-size: 26px;
  color: #000;
}
i { font-style: normal; }
svg { display: block; flex: none; overflow: visible; }
.defs { position: absolute; }

.window {
  width: 2270px;
  height: 1554px;
  display: flex;
  flex-direction: column;
  background: #ebebeb;
  border-radius: 10px;
  box-shadow: 0 0 0 1px rgba(0,0,0,.28), 0 40px 76px rgba(0,0,0,.53), 0 0 24px rgba(0,0,0,.06);
}

.titlebar {
  height: 44px;
  display: flex;
  align-items: center;
  background: linear-gradient(#f6f6f6 0, #ebebeb 3px, #d2d2d2 100%);
  border-bottom: 1px solid #a9a9a9;
  border-radius: 10px 10px 0 0;
}
.lights { display: flex; gap: 16px; padding-left: 16px; width: 1059px; }
.light { width: 24px; height: 24px; border-radius: 50%; border: 1px solid; }
.light-close { background: #fc605c; border-color: #de4a46; }
.light-min { background: #fdbc40; border-color: #dc9e30; }
.light-zoom { background: #34c84a; border-color: #24a838; }
.title-logo { width: 30px; height: 28px; }
.title { margin-left: 9px; padding-top: 2px; color: #4a4a4a; letter-spacing: -.2px; }

.toolbar {
  height: 56px;
  display: flex;
  align-items: center;
  padding: 0 0 0 14px;
  border-top: 2px solid #fff;
  border-bottom: 3px solid #adadad;
  background: linear-gradient(#f1f1f1, #c8c8c8);
}
.toolbar > * { flex: none; }
.handle { width: 12px; height: 24px; margin-top: -7px; }
.tool { width: 48px; height: 48px; margin-right: 12px; }
.cube { height: 52px; }
.dim { opacity: .5; }
.faint { opacity: .38; }
.sep {
  width: 32px;
  height: 46px;
  background: repeating-linear-gradient(#7a7a7a 0 2px, transparent 2px 6px) 8px 0 / 2px 100% no-repeat;
}
.menu-tool { width: 108px; height: 48px; display: flex; padding-left: 22px; }
.menu-tool .tool { margin-right: 0; }
.menu-tool-redo { padding-left: 20px; }
.menu-tool-redo .caret { margin-left: 0; }
.caret {
  width: 16px;
  height: 16px;
  margin: 26px 0 0 -2px;
  background: #666;
  clip-path: polygon(0 0, 100% 0, 50% 100%);
}
.handle-gap { margin-left: 6px; }
.handle-gap-wide { margin-left: 23px; }
.combo {
  width: 377px;
  height: 39px;
  margin: -1px 0 0 4px;
  display: flex;
  align-items: center;
  background: #fff;
  border-radius: 8px;
  box-shadow: 0 0 0 1px #c4c4c4, 0 1px 1px 1px #a8a8a8;
}
.combo-icon { width: 31px; height: 30px; margin-left: 19px; }
.combo span { flex: 1; margin-left: 6px; padding-bottom: 8px; }
.combo-arrows { width: 33px; height: 40px; border-radius: 0 8px 8px 0; background: linear-gradient(#6cb3fa, #157efb); }

.workspace { flex: none; height: 1284px; display: flex; }
.dock { width: 496px; border-right: 3px solid #8e8e8e; display: flex; flex-direction: column; }
.dock-title {
  height: 68px;
  flex: none;
  display: flex;
  align-items: center;
  padding: 0 0 3px 10px;
  font-size: 22px;
  border-top: 2px solid #fff;
  border-bottom: 3px solid #adadad;
  background: linear-gradient(#f1f1f1, #c8c8c8);
}
.dock-btn { width: 28px; height: 28px; margin-right: 20px; }
.dock-title span { margin-left: 125px; }

.tabs { display: flex; flex: none; position: relative; z-index: 1; height: 40px; }
.tab {
  display: flex;
  align-items: center;
  justify-content: center;
  background: #fff;
  box-shadow: 0 0 0 1px #c6c6c6, 0 1px 1px 1px #b4b4b4;
}
.tab-on {
  color: #fff;
  background: linear-gradient(#6cb3fa, #157efb);
  box-shadow: inset 0 0 0 1px #3f94f5;
}
.tabs-top { margin-left: 85px; }
.tab-model { width: 164px; padding: 1px 6px 0 0; border-radius: 8px 0 0 8px; }
.tab-tasks { width: 157px; padding: 1px 0 0 6px; border-radius: 0 8px 8px 0; clip-path: inset(-4px -4px -4px 0); }
.tabs-bottom { margin: -18px 0 0 94px; height: 38px; }
.tab-view { width: 143px; padding: 0 3px 3px 0; border-radius: 8px 0 0 8px; clip-path: inset(-4px 0 -4px -4px); }
.tab-data { width: 150px; padding: 0 0 3px 7px; border-radius: 0 8px 8px 0; }

.panel {
  height: 1196px;
  margin-top: -20px;
  padding: 31px 5px 0 5px;
  background: #e2e2e2;
  border: 1px solid #dadada;
  border-radius: 8px;
}
.tree {
  width: 482px;
  height: 772px;
  display: flex;
  background: #fff;
  border: 2px solid #b4b4b4;
  border-top-color: #8a8a8a;
}
.tree-main { width: 448px; }
.tree-head { height: 34px; background: #ececec; font-size: 22px; }
.tree-head span {
  display: block;
  width: 434px;
  height: 34px;
  padding-left: 16px;
  line-height: 32px;
  letter-spacing: -.05px;
  background: #f5f5f5;
  border-bottom: 2px solid #c9c9c9;
}
.row { height: 68px; display: flex; align-items: center; padding-left: 90px; }
.row svg { width: 64px; height: 64px; }
.row span { margin-left: 12px; padding-bottom: 2px; white-space: nowrap; letter-spacing: -.1px; }
.row .arrow {
  width: 15px;
  height: 18px;
  margin: 0 21px 0 -36px;
  background: #8a8a8a;
  clip-path: polygon(0 0, 100% 50%, 0 100%);
}
.off svg { opacity: .52; }
.off .strong { opacity: .6; }
.off span, .muted { color: #474747; }
.current span { font-weight: bold; letter-spacing: -.05px; }
.scroll { width: 30px; padding: 179px 0 0 6px; background: #fafafa; border-left: 2px solid #e6e6e6; border-right: 2px solid #ececec; }
.thumb { display: block; width: 16px; height: 587px; border-radius: 8px; background: #c1c1c1; }
.splitter { width: 482px; height: 14px; padding: 1px 0 0 235px; background: #fbfbfb; }
.splitter i { display: block; width: 12px; height: 12px; border-radius: 50%; background: radial-gradient(#d6d6d6 30%, #b4b4b4); }
.group { width: 482px; height: 352px; padding: 5px; background: #d8d8d8; border: 1px solid #cecece; border-radius: 8px; }
.props { width: 470px; height: 314px; border: 2px solid #b4b4b4; border-top-color: #8a8a8a; display: flex; flex-direction: column; }
.props-head { display: flex; align-items: center; height: 34px; flex: none; font-size: 22px; background: #f5f5f5; border-bottom: 2px solid #c9c9c9; }
.col-prop { width: 200px; padding-left: 16px; line-height: 24px; border-right: 2px solid #d6d6d6; }
.col-value { padding-left: 16px; }
.stripes { flex: 1; background: repeating-linear-gradient(#fff 0 36px, #ebf2ff 36px 72px); }

.mdi { width: 1774px; }
.view3d { width: 1774px; height: 1212px; overflow: hidden; background: linear-gradient(#333366, #9797ab); }
.axes text { font: 20px "Liberation Mono", monospace; fill: #000; }
.mdi-tabs { height: 72px; display: flex; }
.mdi-edge { height: 22px; flex: 1; background: #e1e1e1; border-bottom: 1px solid #d9d9d9; }
.mdi-edge:first-child { flex: none; width: 720px; border-radius: 0 0 0 8px; }
.mdi-edge:last-child { border-radius: 0 0 8px 0; }
.mdi-slot { width: 336px; padding: 2px 4px 0; }
.mdi-tab {
  height: 68px;
  display: flex;
  align-items: center;
  padding-left: 43px;
  color: #fff;
  background: linear-gradient(#6cb3fa, #157efb);
  border: 1px solid #2f86f8;
  border-radius: 8px;
}
.mdi-close { width: 24px; height: 24px; }
.mdi-logo { width: 57px; height: 54px; margin: -5px 0 0 11px; }
.mdi-tab span { margin-left: 12px; padding-bottom: 6px; letter-spacing: -.1px; }

.status { flex: 1; display: flex; align-items: center; padding-left: 1977px; }
.status span { width: 269px; margin-top: -7px; }
.grip { width: 24px; height: 24px; align-self: flex-end; }
```
